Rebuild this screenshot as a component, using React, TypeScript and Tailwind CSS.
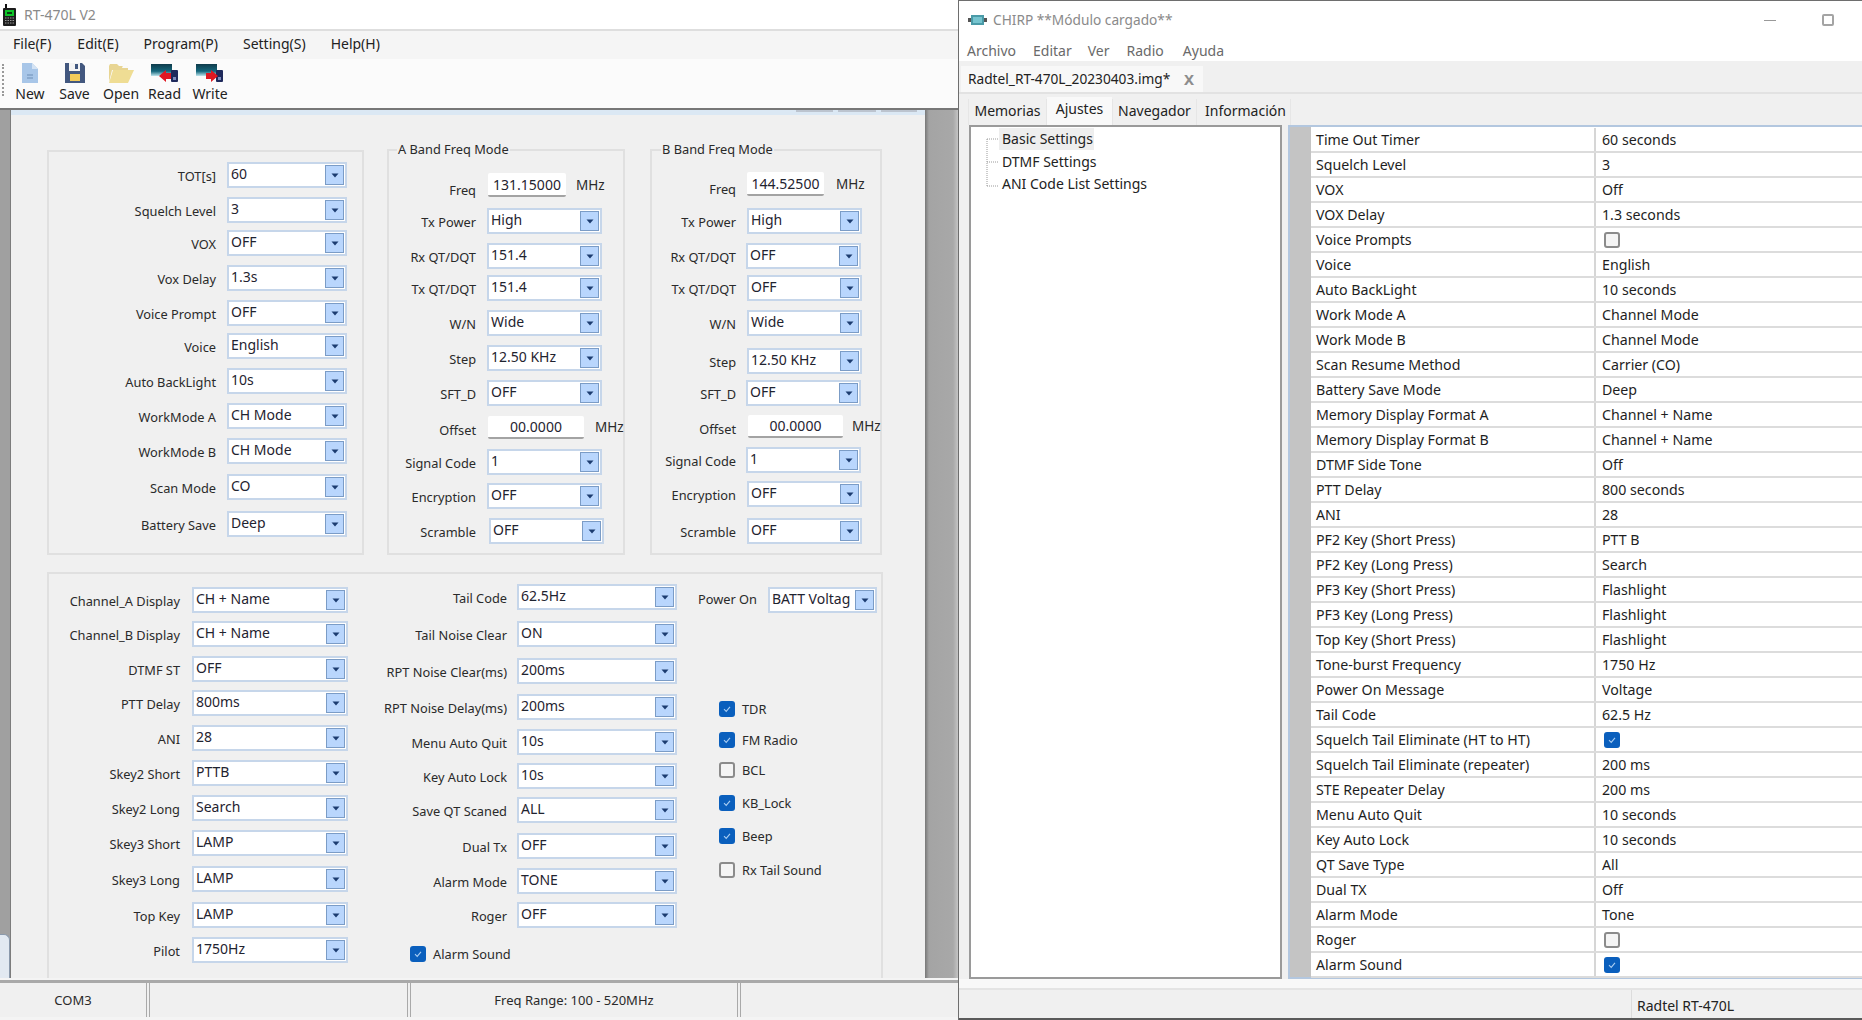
import React from "react";
import clsx from "clsx";

const Arrow = () => (
  <svg width="8" height="5" viewBox="0 0 8 5"><path d="M0.5 0.5H7.5L4 4.5Z" fill="#1c3c70" /></svg>
);

function Combo({ value, className }: { value: string; className: string }) {
  return (
    <div className={clsx("flex h-[26px] shrink-0 border-2 border-[#c6d6ea] bg-white", className)}>
      <span className="min-w-0 flex-1 overflow-hidden whitespace-nowrap pl-[2px] text-[14px] leading-[19px] text-[#1f2330]">{value}</span>
      <span className="my-px mr-px flex w-[19px] shrink-0 items-center justify-center border border-[#7b9cc6] bg-[#b9d6fd]">
        <Arrow />
      </span>
    </div>
  );
}

function Label({ text, className }: { text: string; className: string }) {
  return <span className={clsx("shrink-0 whitespace-nowrap pt-[5px] text-right text-[12.8px] leading-[19px] text-[#2a2a2a]", className)}>{text}</span>;
}

function Check({ on, box = "" }: { on: boolean; box?: string }) {
  return on ? (
    <span className={clsx("flex h-[16px] w-[16px] shrink-0 items-center justify-center rounded-[3px] bg-[#0a5fbd]", box)}>
      <svg width="10" height="10" viewBox="0 0 10 10"><path d="M2 5.2L4.2 7.4L8 2.8" fill="none" stroke="#a9cdf2" strokeWidth="1.1" /></svg>
    </span>
  ) : (
    <span className={clsx("h-[16px] w-[16px] shrink-0 rounded-[3px] border-2 border-[#8b8b8b] bg-[#f4f4f4]", box)} />
  );
}

function FreqInput({ value, w, h, mhz }: { value: string; w: string; h: string; mhz: string }) {
  return (
    <>
      <div className={clsx("flex shrink-0 items-center justify-center rounded-[2px] border-b-2 border-[#a3a3a3] bg-white text-[14px] text-[#1f2330]", w, h)}>{value}</div>
      <span className={clsx("text-[13.5px] text-[#2a2a2a]", mhz)}>MHz</span>
    </>
  );
}

type Row = [string, string, string, string?];

const general: Row[] = [
  ["TOT[s]", "60", ""],
  ["Squelch Level", "3", "mt-[9px]"],
  ["VOX", "OFF", "mt-[7px]"],
  ["Vox Delay", "1.3s", "mt-[9px]"],
  ["Voice Prompt", "OFF", "mt-[9px]"],
  ["Voice", "English", "mt-[7px]"],
  ["Auto BackLight", "10s", "mt-[9px]"],
  ["WorkMode A", "CH Mode", "mt-[9px]"],
  ["WorkMode B", "CH Mode", "mt-[9px]"],
  ["Scan Mode", "CO", "mt-[10px]"],
  ["Battery Save", "Deep", "mt-[11px]"],
];

const bandA: Row[] = [
  ["Tx Power", "High", "mt-[11px]"],
  ["Rx QT/DQT", "151.4", "mt-[9px]"],
  ["Tx QT/DQT", "151.4", "mt-[6px]"],
  ["W/N", "Wide", "mt-[9px]"],
  ["Step", "12.50 KHz", "mt-[9px]"],
  ["SFT_D", "OFF", "mt-[9px]"],
];
const bandA2: Row[] = [
  ["Signal Code", "1", "mt-[10px]"],
  ["Encryption", "OFF", "mt-[8px]"],
  ["Scramble", "OFF", "mt-[9px]", "ml-[2px]"],
];
const bandB: Row[] = [
  ["Tx Power", "High", "mt-[12px]"],
  ["Rx QT/DQT", "OFF", "mt-[9px]", "-ml-px"],
  ["Tx QT/DQT", "OFF", "mt-[6px]"],
  ["W/N", "Wide", "mt-[9px]"],
  ["Step", "12.50 KHz", "mt-[12px]"],
  ["SFT_D", "OFF", "mt-[6px]", "-ml-px"],
];
const bandB2: Row[] = [
  ["Signal Code", "1", "mt-[9px]", "-ml-px"],
  ["Encryption", "OFF", "mt-[8px]"],
  ["Scramble", "OFF", "mt-[11px]"],
];

const lowerA: Row[] = [
  ["Channel_A Display", "CH + Name", ""],
  ["Channel_B Display", "CH + Name", "mt-[8px]"],
  ["DTMF ST", "OFF", "mt-[9px]"],
  ["PTT Delay", "800ms", "mt-[8px]"],
  ["ANI", "28", "mt-[9px]"],
  ["Skey2 Short", "PTTB", "mt-[9px]"],
  ["Skey2 Long", "Search", "mt-[9px]"],
  ["Skey3 Short", "LAMP", "mt-[9px]"],
  ["Skey3 Long", "LAMP", "mt-[10px]"],
  ["Top Key", "LAMP", "mt-[10px]"],
  ["Pilot", "1750Hz", "mt-[9px]"],
];

const lowerB: Row[] = [
  ["Tail Code", "62.5Hz", ""],
  ["Tail Noise Clear", "ON", "mt-[11px]"],
  ["RPT Noise Clear(ms)", "200ms", "mt-[11px]"],
  ["RPT Noise Delay(ms)", "200ms", "mt-[10px]"],
  ["Menu Auto Quit", "10s", "mt-[9px]"],
  ["Key Auto Lock", "10s", "mt-[8px]"],
  ["Save QT Scaned", "ALL", "mt-[8px]"],
  ["Dual Tx", "OFF", "mt-[10px]"],
  ["Alarm Mode", "TONE", "mt-[9px]"],
  ["Roger", "OFF", "mt-[8px]"],
];

const checks: [string, boolean, string][] = [
  ["TDR", true, "mt-[88px]"],
  ["FM Radio", true, "mt-[15px]"],
  ["BCL", false, "mt-[14px]"],
  ["KB_Lock", true, "mt-[17px]"],
  ["Beep", true, "mt-[17px]"],
  ["Rx Tail Sound", false, "mt-[18px]"],
];

const settings: [string, string | boolean][] = [
  ["Time Out Timer", "60 seconds"],
  ["Squelch Level", "3"],
  ["VOX", "Off"],
  ["VOX Delay", "1.3 seconds"],
  ["Voice Prompts", false],
  ["Voice", "English"],
  ["Auto BackLight", "10 seconds"],
  ["Work Mode A", "Channel Mode"],
  ["Work Mode B", "Channel Mode"],
  ["Scan Resume Method", "Carrier (CO)"],
  ["Battery Save Mode", "Deep"],
  ["Memory Display Format A", "Channel + Name"],
  ["Memory Display Format B", "Channel + Name"],
  ["DTMF Side Tone", "Off"],
  ["PTT Delay", "800 seconds"],
  ["ANI", "28"],
  ["PF2 Key (Short Press)", "PTT B"],
  ["PF2 Key (Long Press)", "Search"],
  ["PF3 Key (Short Press)", "Flashlight"],
  ["PF3 Key (Long Press)", "Flashlight"],
  ["Top Key (Short Press)", "Flashlight"],
  ["Tone-burst Frequency", "1750 Hz"],
  ["Power On Message", "Voltage"],
  ["Tail Code", "62.5 Hz"],
  ["Squelch Tail Eliminate (HT to HT)", true],
  ["Squelch Tail Eliminate (repeater)", "200 ms"],
  ["STE Repeater Delay", "200 ms"],
  ["Menu Auto Quit", "10 seconds"],
  ["Key Auto Lock", "10 seconds"],
  ["QT Save Type", "All"],
  ["Dual TX", "Off"],
  ["Alarm Mode", "Tone"],
  ["Roger", false],
  ["Alarm Sound", true],
];

function Fields({ rows, labelW, comboW }: { rows: Row[]; labelW: string; comboW: string }) {
  return (
    <>
      {rows.map(([l, v, mt, shift]) => (
        <div key={l} className={clsx("flex items-start", mt)}>
          <Label text={l} className={labelW} />
          <Combo value={v} className={clsx(comboW, shift)} />
        </div>
      ))}
    </>
  );
}

const NewIcon = () => (
  <svg width="16" height="20" viewBox="0 0 16 20">
    <path d="M0 0H10L16 6V20H0Z" fill="#a8c6e8" />
    <path d="M10 0L16 6H10Z" fill="#d4e3f4" />
    <path d="M5 12H11M5 15H11" stroke="#6d8db5" strokeWidth="1.2" />
  </svg>
);
const SaveIcon = () => (
  <svg width="20" height="20" viewBox="0 0 20 20">
    <path d="M0 0H17L20 3V20H0Z" fill="#43587f" />
    <rect x="4" y="0" width="11" height="8" fill="#f4f4f4" />
    <rect x="10" y="1" width="3" height="5" fill="#43587f" />
    <rect x="5" y="11" width="10" height="7" fill="#f2cb5a" />
  </svg>
);
const OpenIcon = () => (
  <svg width="26" height="20" viewBox="0 0 26 20">
    <path d="M1 3L2 1H9L11 3H20V7H4L1 19Z" fill="#e8d593" />
    <path d="M16 0L22 5H14Z" fill="#fafafa" />
    <path d="M5 7H26L20 20H1Z" fill="#efdd94" />
  </svg>
);
const Transfer = ({ dir }: { dir: "l" | "r" }) => (
  <svg width="28" height="18" viewBox="0 0 28 18">
    <defs>
      <linearGradient id={"scr" + dir} x1="0" y1="0" x2="0" y2="1">
        <stop offset="0" stopColor="#0f3b4b" />
        <stop offset="0.6" stopColor="#14677c" />
        <stop offset="1" stopColor="#bfe6ee" />
      </linearGradient>
    </defs>
    <rect x="0" y="0" width="21" height="12" fill={"url(#scr" + dir + ")"} />
    <rect x="20" y="6" width="7" height="12" rx="1" fill="#1f2a5c" />
    <rect x="22" y="13" width="3" height="3" fill="#7d8bbd" />
    {dir === "l" ? (
      <path d="M8 12L15 6V9H20V15H15V18Z" fill="#e01822" />
    ) : (
      <path d="M22 12L15 6V9H10V15H15V18Z" fill="#e01822" />
    )}
  </svg>
);

const tools: [string, React.ReactNode, string][] = [
  ["New", <NewIcon />, "w-[44px]"],
  ["Save", <SaveIcon />, "w-[45px]"],
  ["Open", <OpenIcon />, "w-[48px]"],
  ["Read", <Transfer dir="l" />, "w-[39px]"],
  ["Write", <Transfer dir="r" />, "w-[52px]"],
];

const menus: [string, string][] = [
  ["File(F)", "ml-[13px]"],
  ["Edit(E)", "ml-[26px]"],
  ["Program(P)", "ml-[25px]"],
  ["Setting(S)", "ml-[25px]"],
  ["Help(H)", "ml-[25px]"],
];

const cMenus: [string, string][] = [
  ["Archivo", "ml-[8px]"],
  ["Editar", "ml-[17px]"],
  ["Ver", "ml-[16px]"],
  ["Radio", "ml-[17px]"],
  ["Ayuda", "ml-[19px]"],
];

function LeftWindow() {
  return (
    <div className="flex h-full w-[958px] shrink-0 flex-col bg-white">
      <div className="flex h-[29px] shrink-0 items-center bg-white pl-[3px]">
        <svg width="13" height="22" viewBox="0 0 13 22">
          <rect x="2" y="0" width="2" height="5" fill="#111" />
          <rect x="0" y="4" width="13" height="18" rx="1" fill="#1c1c1c" />
          <rect x="2" y="6" width="9" height="6" fill="#0ec528" />
          <rect x="4" y="8" width="5" height="2" fill="#0a3d12" />
          <path d="M2 14H11M2 16.500H11M2 19H11" stroke="#9a9a9a" strokeWidth="1" strokeDasharray="1.500 1" />
        </svg>
        <span className="ml-[8px] text-[14px] text-[#8a8a8a]">RT-470L V2</span>
      </div>
      <div className="flex h-[30px] shrink-0 items-center border-t-2 border-[#dedede] bg-[#f5f5f5] pb-[4px] text-[14px] text-[#222]">
        {menus.map(([m, c]) => (
          <span key={m} className={c}>{m}</span>
        ))}
      </div>
      <div className="flex h-[49px] shrink-0 items-start bg-[#fbfbfb]">
        <div className="ml-[2px] mt-[5px] h-[32px] w-[2px] shrink-0 border-l-2 border-dotted border-[#999]" />
        <div className="ml-[4px] flex">
          {tools.map(([t, icon, w]) => (
            <div key={t} className={clsx("flex h-[46px] flex-col items-center pt-[4px]", w)}>
              <div className="flex h-[20px] items-center">{icon}</div>
              <span className="text-[14px] leading-[22px] text-[#222]">{t}</span>
            </div>
          ))}
        </div>
      </div>
      <div className="flex min-h-0 flex-1 border-t-2 border-[#777]">
        <div className="relative flex w-[11px] shrink-0 flex-col justify-end border-r border-[#7c7c7c] bg-[#a0a0a0]">
          <div className="h-[44px] rounded-tr-[6px] border-r border-t border-[#8a99ab] bg-[#e2e9f1]" />
        </div>
        <div className="flex w-[914px] shrink-0 flex-col overflow-hidden bg-[#f0f0f0]">
          <div className="flex h-[5px] shrink-0 justify-end gap-[5px] bg-[#dbe8f4] pr-[8px]">
            <span className="h-[2px] w-[37px] bg-[#bcc4cf]" />
            <span className="h-[2px] w-[38px] bg-[#bcc4cf]" />
            <span className="h-[2px] w-[36px] bg-[#bcc4cf]" />
          </div>
          <div className="ml-[36px] mt-[35px] flex shrink-0 items-start">
            <div className="h-[405px] w-[317px] shrink-0 border-2 border-[#e0e0e0] pt-[10px]">
              <Fields rows={general} labelW="w-[167px] mr-[11px]" comboW="w-[120px]" />
            </div>
            <div className="relative -mt-px ml-[23px] h-[406px] w-[238px] shrink-0 border-2 border-[#e0e0e0] pt-[22px]">
              <span className="absolute left-[8px] top-[-11px] bg-[#f0f0f0] px-[1px] text-[12.8px] leading-[19px] text-[#2a2a2a]">A Band Freq Mode</span>
              <div className="flex items-start">
                <Label text="Freq" className="-mb-[3px] mr-[12px] mt-[3px] w-[87px]" />
                <FreqInput value="131.15000" w="w-[78px]" h="h-[24px]" mhz="ml-[10px] leading-[24px]" />
              </div>
              <Fields rows={bandA} labelW="w-[87px] mr-[11px]" comboW="w-[115px]" />
              <div className="mt-[10px] flex items-start">
                <Label text="Offset" className="-mb-px mr-[12px] w-[87px]" />
                <FreqInput value="00.0000" w="w-[96px]" h="h-[23px]" mhz="ml-[11px] leading-[23px]" />
              </div>
              <Fields rows={bandA2} labelW="w-[87px] mr-[11px]" comboW="w-[115px]" />
            </div>
            <div className="relative -mt-px ml-[25px] h-[406px] w-[232px] shrink-0 border-2 border-[#e0e0e0] pt-[21px]">
              <span className="absolute left-[9px] top-[-11px] bg-[#f0f0f0] px-[1px] text-[12.8px] leading-[19px] text-[#2a2a2a]">B Band Freq Mode</span>
              <div className="flex items-start">
                <Label text="Freq" className="-mb-[3px] mr-[11px] mt-[3px] w-[84px]" />
                <FreqInput value="144.52500" w="w-[77px]" h="h-[24px]" mhz="ml-[12px] leading-[24px]" />
              </div>
              <Fields rows={bandB} labelW="w-[84px] mr-[11px]" comboW="w-[115px]" />
              <div className="mt-[9px] flex items-start">
                <Label text="Offset" className="-mb-px mr-[12px] w-[84px]" />
                <FreqInput value="00.0000" w="w-[95px]" h="h-[23px]" mhz="ml-[9px] leading-[23px]" />
              </div>
              <Fields rows={bandB2} labelW="w-[84px] mr-[11px]" comboW="w-[115px]" />
            </div>
          </div>
          <div className="ml-[36px] mt-[17px] flex w-[836px] flex-1 border-2 border-b-0 border-[#e0e0e0]">
            <div className="w-[299px] shrink-0 pt-[13px]">
              <Fields rows={lowerA} labelW="w-[131px] mr-[12px]" comboW="w-[156px]" />
            </div>
            <div className="w-[329px] shrink-0 pt-[10px]">
              <Fields rows={lowerB} labelW="w-[159px] mr-[10px]" comboW="w-[160px]" />
              <div className="ml-[62px] mt-[18px] flex items-center">
                <Check on />
                <span className="ml-[7px] text-[12.8px] leading-[16px] text-[#2a2a2a]">Alarm Sound</span>
              </div>
            </div>
            <div className="pt-[13px]">
              <div className="flex items-start">
                <span className="ml-[21px] mr-[12px] w-[58px] shrink-0 whitespace-nowrap text-[12.8px] leading-[24px] text-[#2a2a2a]">Power On</span>
                <Combo value="BATT Voltag" className="w-[109px]" />
              </div>
              {checks.map(([t, on, mt]) => (
                <div key={t} className={clsx("ml-[42px] flex items-center", mt)}>
                  <Check on={on} />
                  <span className="ml-[7px] whitespace-nowrap text-[12.8px] leading-[16px] text-[#2a2a2a]">{t}</span>
                </div>
              ))}
            </div>
          </div>
        </div>
        <div className="w-[33px] shrink-0 bg-[linear-gradient(to_right,#787878,#a4a4a4_12%,#a8a8a8_85%,#c4c4c4)]" />
      </div>
      <div className="flex h-[42px] shrink-0 flex-col bg-[#f4f4f4] pt-[2px]">
        <div className="flex h-[37px] gap-[2px] border-t-[3px] border-[#a9a9a9] bg-[#f0f0f0] text-[13px] text-[#2a2a2a]">
          <div className="flex w-[147px] items-center justify-center border-r border-[#a9a9a9] pt-[2px]">COM3</div>
          <div className="w-[259px] border-x border-[#a9a9a9]" />
          <div className="flex w-[328px] items-center justify-center border-x border-[#a9a9a9] pt-[2px]">Freq Range: 100 - 520MHz</div>
          <div className="flex-1 border-l border-[#a9a9a9]" />
        </div>
      </div>
    </div>
  );
}

function RightWindow() {
  return (
    <div className="flex h-full min-w-0 flex-1 flex-col border-l border-t border-[#6e6e6e] bg-[#f0f0f0]">
      <div className="flex h-[38px] shrink-0 items-center bg-white">
        <svg className="ml-[9px]" width="19" height="10" viewBox="0 0 19 10">
          <rect x="0" y="3" width="3" height="4" fill="#555" />
          <rect x="3" y="0" width="13" height="10" fill="#4a9ba8" />
          <rect x="5" y="2" width="9" height="6" fill="#76c4cf" />
          <rect x="16" y="3" width="3" height="4" fill="#555" />
        </svg>
        <span className="ml-[6px] text-[13.7px] text-[#8a8a8a]">CHIRP **Módulo cargado**</span>
        <span className="ml-auto h-px w-[12px] bg-[#999]" />
        <span className="ml-[46px] mr-[28px] h-[12px] w-[12px] rounded-[2px] border-2 border-[#a4a4a4]" />
      </div>
      <div className="flex h-[22px] shrink-0 items-center bg-white text-[14px] text-[#6a6a6a]">
        {cMenus.map(([m, c]) => (
          <span key={m} className={c}>{m}</span>
        ))}
      </div>
      <div className="h-[33px] shrink-0 border-b-2 border-[#e2e2e2] pl-[2px] pt-[5px]">
        <div className="flex h-[26px] w-[242px] items-center bg-[#f8f8f8] pl-[7px] text-[13.7px] text-[#222]">
          <span className="whitespace-nowrap">Radtel_RT-470L_20230403.img*</span>
          <span className="ml-auto mr-[9px] text-[15px] font-bold leading-none text-[#8d8d8d]">X</span>
        </div>
      </div>
      <div className="flex h-[31px] shrink-0 items-end pl-[9px] text-[14px] text-[#222]">
        <div className="flex h-[26px] w-[79px] items-center justify-center border-x border-[#e6e6e6] bg-[#f0f0f0] pb-[3px]">Memorias</div>
        <div className="flex h-[28px] w-[65px] items-start justify-center bg-[#f9f9f9] pt-px">Ajustes</div>
        <div className="flex h-[26px] w-[85px] items-center justify-center border-x border-[#e6e6e6] bg-[#f0f0f0] pb-[3px]">Navegador</div>
        <div className="flex h-[26px] w-[94px] items-center justify-center border-r border-[#e6e6e6] bg-[#f0f0f0] pb-[3px] pl-[4px]">Información</div>
      </div>
      <div className="flex h-[854px] shrink-0 pl-[10px]">
        <div className="relative w-[313px] shrink-0 border-2 border-[#9a9a9a] bg-white pl-[28px] pt-px text-[14px] text-[#222]">
          <svg className="absolute left-[15px] top-[10px]" width="14" height="54" viewBox="0 0 14 54">
            <path d="M1 2V50M1 2H12M1 25H12M1 49H12" fill="none" stroke="#9a9a9a" strokeDasharray="1 1" />
          </svg>
          <div className="h-[22px] w-[95px] bg-[#eeeeee] pl-[3px] leading-[22px]">Basic Settings</div>
          <div className="mt-px h-[22px] pl-[3px] leading-[22px]">DTMF Settings</div>
          <div className="h-[22px] pl-[3px] leading-[22px]">ANI Code List Settings</div>
        </div>
        <div className="ml-[6px] flex min-w-0 flex-1 border-y-2 border-l-2 border-[#b3c7df]">
          <div className="w-[21px] shrink-0 bg-[#c4c4c4]" />
          <div className="min-w-0 flex-1 bg-white pt-px">
            {settings.map(([k, v]) => (
              <div key={k} className="flex h-[25px] border-b-2 border-[#dcdcdc] text-[14.2px] text-[#1e1e1e]">
                <div className="flex w-[285px] shrink-0 items-center whitespace-nowrap border-r-2 border-[#d6d6d6] pl-[5px]">{k}</div>
                <div className="flex flex-1 items-center pl-[6px]">
                  {typeof v === "boolean" ? <Check on={v} box="ml-[2px]" /> : v}
                </div>
              </div>
            ))}
          </div>
        </div>
      </div>
      <div className="h-[11px] shrink-0 border-b-2 border-[#e4e4e4] bg-[#f8f8f8]" />
      <div className="flex min-h-0 flex-1 border-b-2 border-[#5a5a5a]">
        <div className="ml-[672px] flex items-center border-l border-[#dcdcdc] pl-[5px] pt-[2px] text-[14px] text-[#222]">Radtel RT-470L</div>
      </div>
    </div>
  );
}

export default function App() {
  return (
    <div className="flex h-[1020px] w-[1862px] overflow-hidden font-['Noto_Sans',sans-serif]">
      <LeftWindow />
      <RightWindow />
    </div>
  );
}
